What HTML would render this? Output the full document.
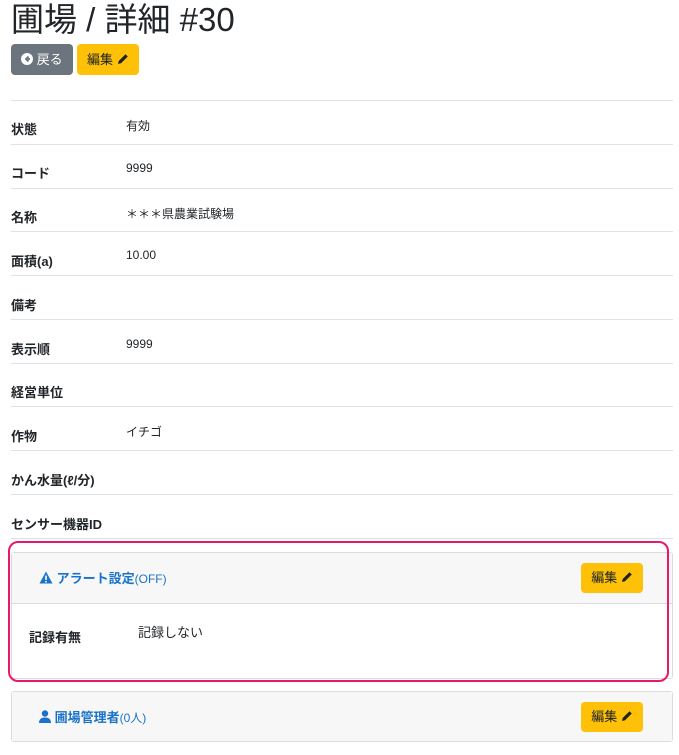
<!DOCTYPE html>
<html><head><meta charset="utf-8"><style>
body{margin:0;width:679px;height:755px;background:#fff;font-family:"Liberation Sans","Noto Sans CJK JP",sans-serif;color:#212529;position:relative;overflow:hidden}
.a{position:absolute}
h1{position:absolute;left:11px;top:-2px;margin:0;font-weight:400;font-size:33px;line-height:44px}
.btn{position:absolute;top:44px;height:31px;border-radius:4px;font-size:13px;line-height:31px;box-sizing:border-box}
.line{position:absolute;left:11px;width:662px;height:1px;background:#dee2e6}
.lab{position:absolute;left:11px;font-size:13px;font-weight:bold}
.val{position:absolute;left:126px;font-size:12px}
.card{position:absolute;left:11px;width:662px;border:1px solid #dcdcdc;border-radius:3px;box-sizing:border-box;background:#fff}
.hd{background:#f7f7f7;height:50px;border-bottom:1px solid #dcdcdc;position:relative}
.ebtn{position:absolute;right:29px;top:10px;width:62px;height:30px;background:#ffc107;border-radius:4px;font-size:13px;line-height:30px;text-align:center}
.blue{color:#1a73c8;font-size:13px;position:absolute;top:15px;left:27px}
</style></head><body>
<h1>圃場 / 詳細 #30</h1>
<div class="btn" style="left:11px;width:62px;background:#6c757d;color:#fff;padding-left:10px"><svg width="12" height="12" viewBox="0 0 12 12" style="vertical-align:-1px"><circle cx="6" cy="6" r="6" fill="#fff"/><path d="M7.5 3.5 5 6l2.5 2.5M5 6h4" stroke="#6c757d" stroke-width="1.8" fill="none"/></svg> 戻る</div>
<div class="btn" style="left:77px;width:62px;background:#ffc107;padding-left:10px">編集 <svg width="12" height="12" viewBox="0 0 12 12" style="vertical-align:-1px"><path d="M1 11l.7-3L8.5 1.2l2.3 2.3L4 10.3z" fill="#222"/></svg></div>
<div class="line" style="top:100px"></div>
<div class="lab" style="top:119px">状態</div><div class="val" style="top:117px">有効</div>
<div class="line" style="top:144px"></div>
<div class="lab" style="top:163px">コード</div><div class="val" style="top:161px">9999</div>
<div class="line" style="top:188px"></div>
<div class="lab" style="top:207px">名称</div><div class="val" style="top:205px">＊＊＊県農業試験場</div>
<div class="line" style="top:231px"></div>
<div class="lab" style="top:251px">面積(a)</div><div class="val" style="top:248px">10.00</div>
<div class="line" style="top:275px"></div>
<div class="lab" style="top:295px">備考</div>
<div class="line" style="top:319px"></div>
<div class="lab" style="top:339px">表示順</div><div class="val" style="top:337px">9999</div>
<div class="line" style="top:363px"></div>
<div class="lab" style="top:382px">経営単位</div>
<div class="line" style="top:406px"></div>
<div class="lab" style="top:426px">作物</div><div class="val" style="top:423px">イチゴ</div>
<div class="line" style="top:450px"></div>
<div class="lab" style="top:470px">かん水量(ℓ/分)</div>
<div class="line" style="top:494px"></div>
<div class="lab" style="top:514px">センサー機器ID</div>
<div class="line" style="top:538px"></div>

<div class="card" style="top:552px;height:127px">
<div class="hd"><div class="blue"><svg width="14" height="13" viewBox="0 0 14 13" style="vertical-align:-1px"><path d="M7 0.5 13.5 12.5H.5z" fill="#1a73c8"/><rect x="6.2" y="4.5" width="1.6" height="4.5" fill="#fff"/><rect x="6.2" y="10" width="1.6" height="1.5" fill="#fff"/></svg> <b style="font-weight:600">アラート設定</b><span style="font-size:12px">(OFF)</span></div><div class="ebtn">編集 <svg width="12" height="12" viewBox="0 0 12 12" style="vertical-align:-1px"><path d="M1 11l.7-3L8.5 1.2l2.3 2.3L4 10.3z" fill="#222"/></svg></div></div>
<div class="lab" style="left:17px;top:74px">記録有無</div><div class="val" style="left:126px;top:69px;font-size:13px">記録しない</div>
</div>
<div class="a" style="left:8px;top:541px;width:657px;height:137px;border:2px solid #e8196a;border-radius:10px"></div>

<div class="card" style="top:691px;height:51px">
<div class="hd" style="border-bottom:none;height:49px"><div class="blue"><svg width="12" height="13" viewBox="0 0 12 13" style="vertical-align:-1px"><circle cx="6" cy="3.5" r="3.2" fill="#1a73c8"/><path d="M0 13c0-4 2.5-5.5 6-5.5s6 1.5 6 5.5z" fill="#1a73c8"/></svg> <b style="font-weight:600">圃場管理者</b><span style="font-size:12px">(0人)</span></div><div class="ebtn">編集 <svg width="12" height="12" viewBox="0 0 12 12" style="vertical-align:-1px"><path d="M1 11l.7-3L8.5 1.2l2.3 2.3L4 10.3z" fill="#222"/></svg></div></div>
</div>
</body></html>
